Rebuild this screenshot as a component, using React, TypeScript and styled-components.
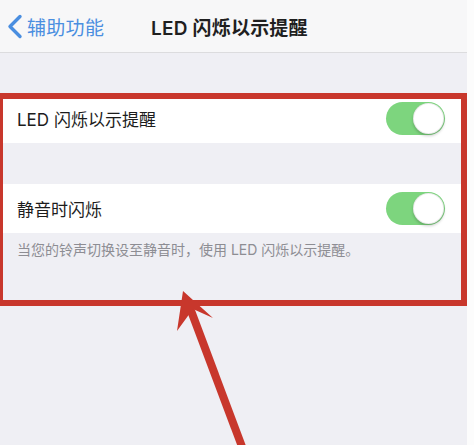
import React from 'react';
import styled, {createGlobalStyle} from 'styled-components';

const GlobalStyle = createGlobalStyle`
  html, body {
    margin: 0;
    padding: 0;
    background: #fcfcfc;
  }
  * {
    box-sizing: border-box;
  }
`;

const FONT = `Inter, "Noto Sans CJK SC", sans-serif`;
const RED = '#c8372c';

type Setting = {label: string; on: boolean};

const settings: Setting[] = [
  {label: 'LED 闪烁以示提醒', on: true},
  {label: '静音时闪烁', on: true},
];

function Toggle({on}: {on: boolean}): JSX.Element {
  return (
    <Track $on={on}>
      <Knob />
    </Track>
  );
}

function BackChevron(): JSX.Element {
  return (
    <svg width="16" height="25" viewBox="0 0 16 25">
      <polyline
        points="13,2.5 3,12.5 13,22.5"
        fill="none"
        stroke="#4a8ee0"
        strokeWidth="3.4"
        strokeLinecap="round"
        strokeLinejoin="round"
      />
    </svg>
  );
}

export default function App(): JSX.Element {
  return (
    <>
      <GlobalStyle />
      <Frame>
        <Screen>
          <NavBar>
            <BackButton>
              <BackChevron />
              <BackText>辅助功能</BackText>
            </BackButton>
            <Title>LED 闪烁以示提醒</Title>
          </NavBar>

          <Group>
            <Row>
              <RowLabel>{settings[0].label}</RowLabel>
              <Toggle on={settings[0].on} />
            </Row>
          </Group>

          <Group>
            <Row>
              <RowLabel>{settings[1].label}</RowLabel>
              <Toggle on={settings[1].on} />
            </Row>
          </Group>
          <Footer>当您的铃声切换设至静音时，使用 LED 闪烁以示提醒。</Footer>
        </Screen>
        <EdgeStrip />

        <Highlight />
        <ArrowLayer width="474" height="445" viewBox="0 0 474 445">
          <line x1="190" y1="308" x2="244" y2="452" stroke={RED} strokeWidth="8" />
          <polygon points="183,291 213,318 193,309 177,331" fill={RED} />
        </ArrowLayer>
      </Frame>
    </>
  );
}

const Frame = styled.div`
  position: relative;
  display: flex;
  width: 474px;
  height: 445px;
  overflow: hidden;
  font-family: ${FONT};
`;
const Screen = styled.div`
  display: flex;
  flex-direction: column;
  width: 467px;
  height: 100%;
  background: #efeff4;
`;
const EdgeStrip = styled.div`
  flex: 1;
  background: #fcfcfc;
`;
const NavBar = styled.header`
  display: flex;
  align-items: center;
  height: 53px;
  padding: 0 0 0 7px;
  background: #f7f7f8;
  border-bottom: 1px solid #dcdcde;
`;
const BackButton = styled.div`
  display: flex;
  align-items: center;
  gap: 4px;
  width: 144px;
`;
const BackText = styled.span`
  font-size: 19px;
  color: #4a8ee0;
  letter-spacing: 0.3px;
`;
const Title = styled.h1`
  margin: 0;
  font-size: 19px;
  font-weight: 600;
  color: #1f1f1f;
  letter-spacing: 0.2px;
`;
const Group = styled.section`
  margin-top: 41px;
  background: #ffffff;
`;
const Row = styled.div`
  display: flex;
  align-items: center;
  justify-content: space-between;
  height: 49px;
  padding: 0 22px 0 17px;
`;
const RowLabel = styled.span`
  font-size: 17px;
  color: #1c1c1c;
`;
const Track = styled.div<{$on: boolean}>`
  display: flex;
  justify-content: ${({$on}) => ($on ? 'flex-end' : 'flex-start')};
  align-items: center;
  width: 59px;
  height: 33px;
  padding: 1px;
  border-radius: 17px;
  background: ${({$on}) => ($on ? '#7dd57e' : '#e5e5ea')};
`;
const Knob = styled.div`
  width: 31px;
  height: 31px;
  border-radius: 50%;
  background: #ffffff;
  border: 1px solid rgba(0, 0, 0, 0.08);
  box-shadow: 0 2px 3px rgba(0, 0, 0, 0.2);
`;
const Footer = styled.p`
  margin: 8px 0 0;
  padding: 0 17px;
  font-size: 14px;
  line-height: 18px;
  color: #8d8d93;
`;
const Highlight = styled.div`
  position: absolute;
  left: -3px;
  top: 93px;
  width: 470px;
  height: 213px;
  border: 6px solid ${RED};
  pointer-events: none;
`;
const ArrowLayer = styled.svg`
  position: absolute;
  left: 0;
  top: 0;
  pointer-events: none;
`;
